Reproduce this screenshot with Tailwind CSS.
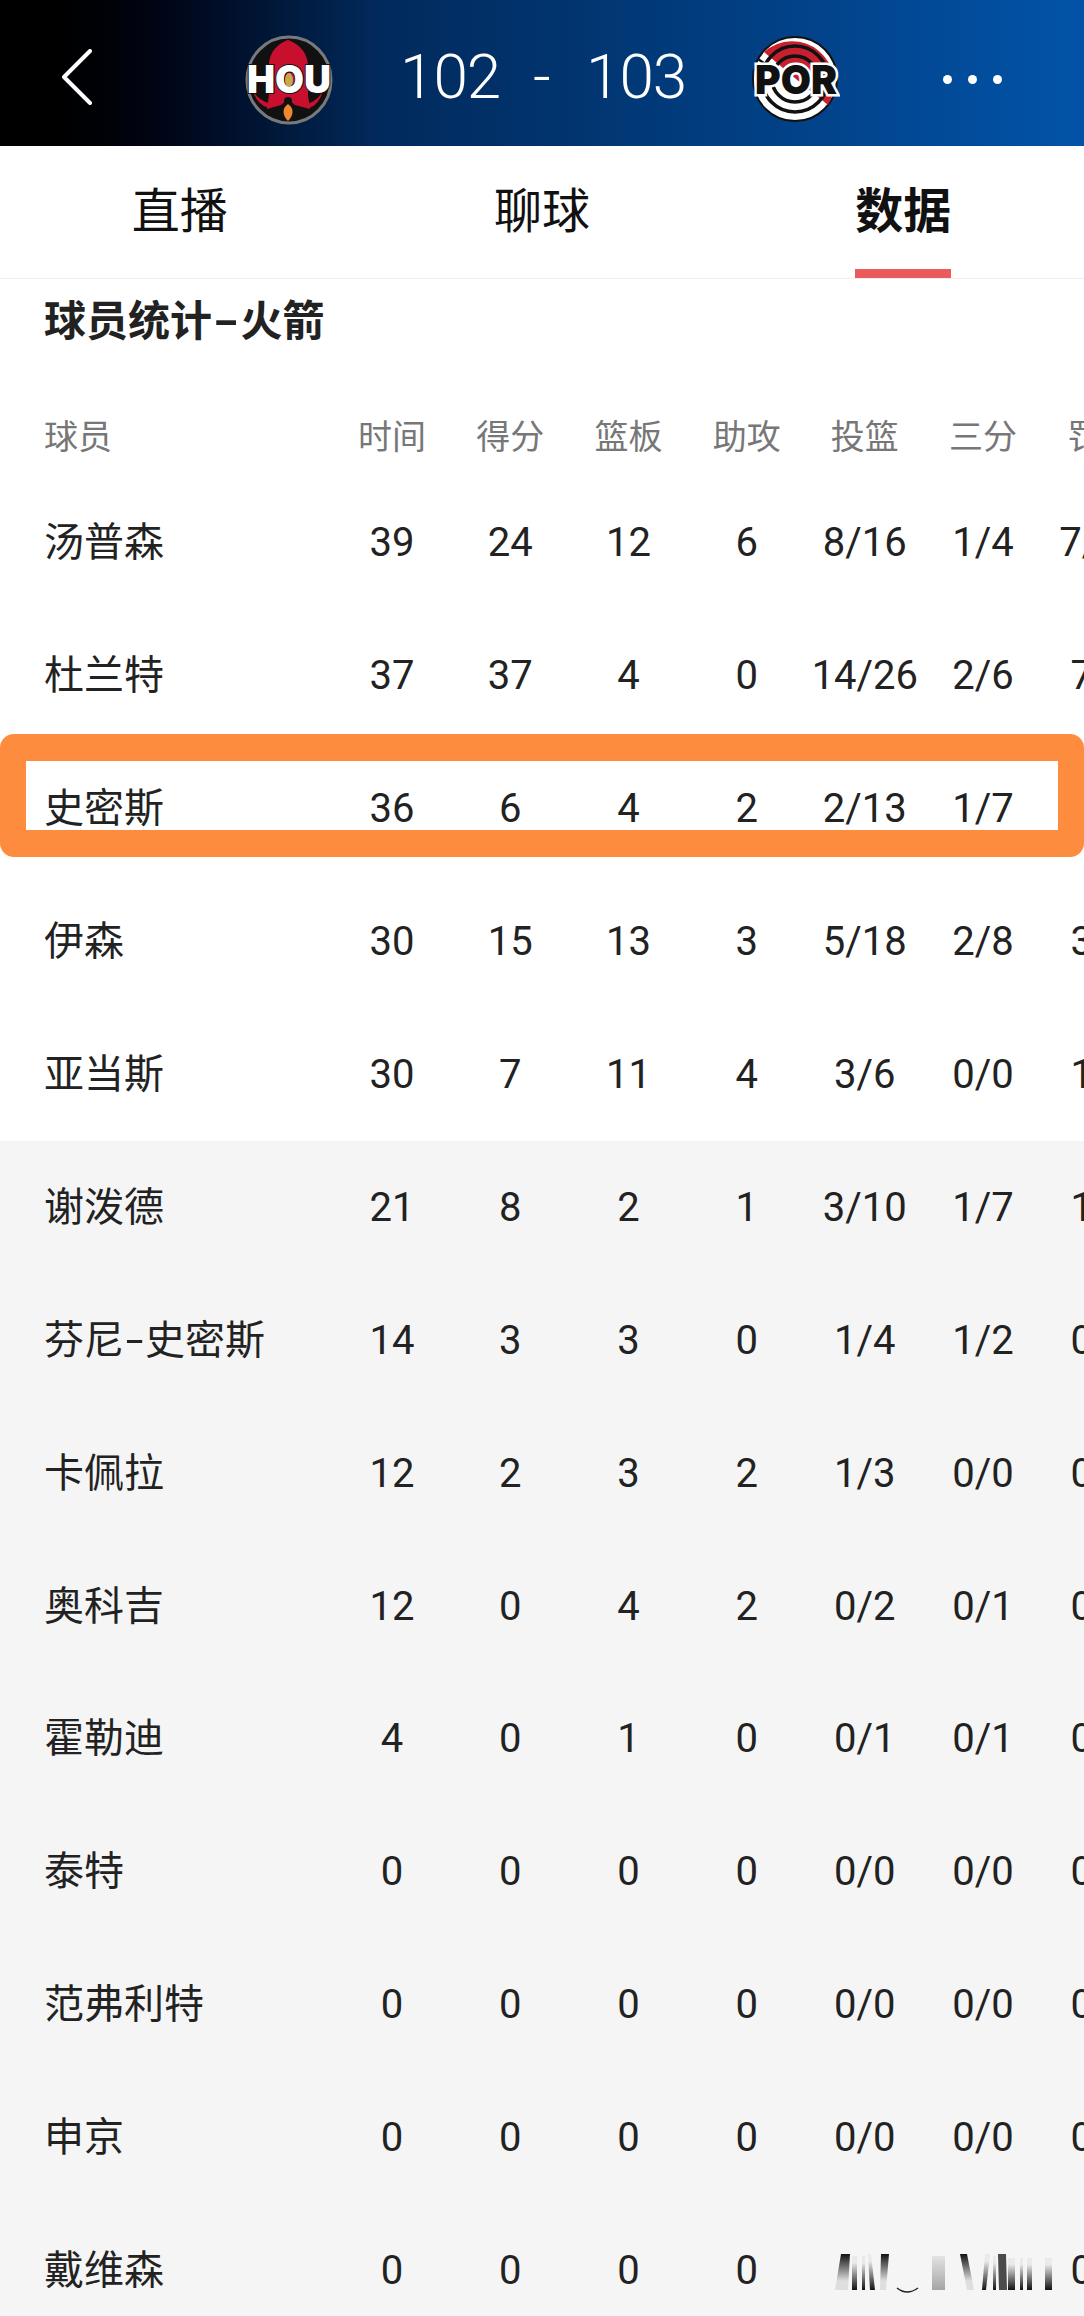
<!DOCTYPE html>
<html lang="zh-CN">

<head>
    <meta charset="UTF-8">
    <meta name="viewport" content="width=device-width, initial-scale=1.0">
    <title>球员统计</title>
    <script src="https://cdn.jsdelivr.net/npm/@tailwindcss/browser@4"></script>
</head>

<body class="font-['Roboto','Noto_Sans_CJK_SC',sans-serif] bg-white">
    <div class="relative w-[1084px] h-[2316px] overflow-hidden">

        <!-- score bar -->
        <header class="flex items-center h-[146px] pt-[8px] pl-[62px] text-white bg-gradient-to-r from-black via-[#012a5c] via-35% to-[#0253a8]">
            <svg class="w-[30px] h-[56px]" viewBox="0 0 30 56" fill="none" stroke="#fff" stroke-width="4" stroke-linecap="round" stroke-linejoin="round">
                <path d="M28 2 L2 28 L28 54"/>
            </svg>
            <svg class="ml-[153px] mt-[6px] w-[88px] h-[90px]" viewBox="0 0 88 90">
                <ellipse cx="44" cy="45" rx="42" ry="43" fill="#111" stroke="#77797c" stroke-width="3"/>
                <path d="M43 5 C54 9 64 18 63 34 L63 60 L65 74 L50 70 L43 64 L36 70 L22 74 L24 60 L24 34 C23 18 32 9 43 5Z" fill="#c8102e"/>
                <path d="M8 56 Q14 66 24 68 L24 73 Q12 70 8 56Z M78 56 Q72 66 64 68 L64 73 Q74 70 78 56Z" fill="#c8102e"/>
                <circle cx="43" cy="66" r="4" fill="#111"/>
                <path d="M43 69 C49 73 49 80 43 86 C37 80 37 73 43 69Z" fill="#f0872f"/>
                <text x="44" y="58" text-anchor="middle" font-family="Inter, Roboto, sans-serif" font-weight="900" font-size="38" fill="#fff" stroke="#111" stroke-width="2" paint-order="stroke" textLength="84" lengthAdjust="spacingAndGlyphs">HOU</text>
                <ellipse cx="44" cy="45" rx="4" ry="7" fill="#c9a94e"/>
            </svg>
            <div class="ml-[67px] w-[98px] text-[62px] font-light leading-none tracking-[-1px]">102</div>
            <div class="w-[88px] text-center text-[62px] font-light leading-none">-</div>
            <div class="w-[98px] text-[62px] font-light leading-none tracking-[-1px]">103</div>
            <svg class="ml-[68px] mt-[6px] w-[88px] h-[90px]" viewBox="0 0 88 90" fill="none">
                <circle cx="43" cy="44" r="42" fill="#fff" stroke="#111" stroke-width="2"/>
                <path d="M12 17 A42 42 0 0 1 76 70 L44 44Z" fill="#c8202f"/>
                <circle cx="43" cy="44" r="33" stroke="#111" stroke-width="3.5"/>
                <circle cx="43" cy="44" r="23" stroke="#111" stroke-width="3.5"/>
                <path d="M6 24 L20 34" stroke="#111" stroke-width="2.5"/>
                <text x="44" y="59" text-anchor="middle" font-family="Inter, Roboto, sans-serif" font-weight="900" font-size="40" fill="#111" stroke="#fff" stroke-width="5" paint-order="stroke" textLength="82" lengthAdjust="spacingAndGlyphs">POR</text>
            </svg>
            <div class="ml-[103px] flex gap-[16px] mt-[4px]">
                <span class="w-[9px] h-[9px] rounded-full bg-white"></span>
                <span class="w-[9px] h-[9px] rounded-full bg-white"></span>
                <span class="w-[9px] h-[9px] rounded-full bg-white"></span>
            </div>
        </header>

        <!-- tabs -->
        <nav class="grid grid-cols-3 h-[133px] border-b border-[#efefef] text-[48px] text-[#111] bg-white">
            <div class="flex items-center justify-center pr-[2px]">直播</div>
            <div class="flex items-center justify-center">聊球</div>
            <div class="flex justify-center">
                <div class="flex items-center justify-center w-[96px] h-[132px] pt-[9px] border-b-[9px] border-[#ec5b5b] font-bold">数据</div>
            </div>
        </nav>

        <h2 class="h-[118px] pt-[20px] pl-[44px] text-[42px] leading-[46px] font-bold text-[#222]">球员统计<span class="inline-block mx-[6px] scale-x-[1.7]">-</span>火箭</h2>

        <div class="text-[40px] text-[#222]">
            <div class="grid grid-cols-[333px_repeat(7,118.2px)] items-center h-[80px] text-center text-[34px] text-[#777]">
                <div class="text-left pl-[44px]">球员</div><div>时间</div><div>得分</div><div>篮板</div><div>助攻</div><div>投篮</div><div>三分</div><div>罚球</div>
            </div>
            <div class="bg-white">
                <div class="grid grid-cols-[333px_repeat(7,118.2px)] items-center h-[132.9px] text-center"><div class="text-left pl-[44px]">汤普森</div><div>39</div><div>24</div><div>12</div><div>6</div><div>8/16</div><div>1/4</div><div>7/10</div></div>
                <div class="grid grid-cols-[333px_repeat(7,118.2px)] items-center h-[132.9px] text-center"><div class="text-left pl-[44px]">杜兰特</div><div>37</div><div>37</div><div>4</div><div>0</div><div>14/26</div><div>2/6</div><div>7/8</div></div>
                <div class="grid grid-cols-[333px_repeat(7,118.2px)] items-center h-[132.9px] text-center"><div class="text-left pl-[44px]">史密斯</div><div>36</div><div>6</div><div>4</div><div>2</div><div>2/13</div><div>1/7</div><div>2/2</div></div>
                <div class="grid grid-cols-[333px_repeat(7,118.2px)] items-center h-[132.9px] text-center"><div class="text-left pl-[44px]">伊森</div><div>30</div><div>15</div><div>13</div><div>3</div><div>5/18</div><div>2/8</div><div>3/4</div></div>
                <div class="grid grid-cols-[333px_repeat(7,118.2px)] items-center h-[132.9px] text-center"><div class="text-left pl-[44px]">亚当斯</div><div>30</div><div>7</div><div>11</div><div>4</div><div>3/6</div><div>0/0</div><div>1/2</div></div>
            </div>
            <div class="bg-[#f5f5f5]">
                <div class="grid grid-cols-[333px_repeat(7,118.2px)] items-center h-[132.9px] text-center"><div class="text-left pl-[44px]">谢泼德</div><div>21</div><div>8</div><div>2</div><div>1</div><div>3/10</div><div>1/7</div><div>1/2</div></div>
                <div class="grid grid-cols-[333px_repeat(7,118.2px)] items-center h-[132.9px] text-center"><div class="text-left pl-[44px]">芬尼<span class="inline-block mx-[5px] scale-x-[1.6]">-</span>史密斯</div><div>14</div><div>3</div><div>3</div><div>0</div><div>1/4</div><div>1/2</div><div>0/0</div></div>
                <div class="grid grid-cols-[333px_repeat(7,118.2px)] items-center h-[132.9px] text-center"><div class="text-left pl-[44px]">卡佩拉</div><div>12</div><div>2</div><div>3</div><div>2</div><div>1/3</div><div>0/0</div><div>0/0</div></div>
                <div class="grid grid-cols-[333px_repeat(7,118.2px)] items-center h-[132.9px] text-center"><div class="text-left pl-[44px]">奥科吉</div><div>12</div><div>0</div><div>4</div><div>2</div><div>0/2</div><div>0/1</div><div>0/0</div></div>
                <div class="grid grid-cols-[333px_repeat(7,118.2px)] items-center h-[132.9px] text-center"><div class="text-left pl-[44px]">霍勒迪</div><div>4</div><div>0</div><div>1</div><div>0</div><div>0/1</div><div>0/1</div><div>0/0</div></div>
                <div class="grid grid-cols-[333px_repeat(7,118.2px)] items-center h-[132.9px] text-center"><div class="text-left pl-[44px]">泰特</div><div>0</div><div>0</div><div>0</div><div>0</div><div>0/0</div><div>0/0</div><div>0/0</div></div>
                <div class="grid grid-cols-[333px_repeat(7,118.2px)] items-center h-[132.9px] text-center"><div class="text-left pl-[44px]">范弗利特</div><div>0</div><div>0</div><div>0</div><div>0</div><div>0/0</div><div>0/0</div><div>0/0</div></div>
                <div class="grid grid-cols-[333px_repeat(7,118.2px)] items-center h-[132.9px] text-center"><div class="text-left pl-[44px]">申京</div><div>0</div><div>0</div><div>0</div><div>0</div><div>0/0</div><div>0/0</div><div>0/0</div></div>
                <div class="grid grid-cols-[333px_repeat(7,118.2px)] items-center h-[132.9px] text-center"><div class="text-left pl-[44px]">戴维森</div><div>0</div><div>0</div><div>0</div><div>0</div><div>0/0</div><div>0/0</div><div>0/0</div></div>
            </div>
        </div>

        <!-- orange highlight drawn over the third row -->
        <div class="absolute left-0 top-[734px] w-full h-[123px] border-x-[26px] border-y-[27px] border-[#fe8c3e] rounded-[14px]"></div>

        <!-- smeared watermark over the last row -->
        <svg class="absolute left-[826px] top-[2246px] w-[236px] h-[54px] bg-[#f5f5f5]" viewBox="826 2246 236 54" fill="none">
            <defs>
                <linearGradient id="down" x1="0" y1="0" x2="0" y2="1"><stop offset="0" stop-color="#111"/><stop offset="0.75" stop-color="#111" stop-opacity="0.1"/></linearGradient>
                <linearGradient id="up" x1="0" y1="1" x2="0" y2="0"><stop offset="0" stop-color="#111"/><stop offset="0.8" stop-color="#111" stop-opacity="0.05"/></linearGradient>
                <linearGradient id="flat" x1="0" y1="0" x2="0" y2="1"><stop offset="0" stop-color="#111" stop-opacity="0.08"/><stop offset="1" stop-color="#111" stop-opacity="0.35"/></linearGradient>
            </defs>
            <path d="M841 2254h9l-2 36h-13z" fill="url(#down)"/>
            <rect x="852" y="2256" width="5" height="34" fill="url(#up)"/>
            <rect x="862" y="2256" width="3" height="34" fill="url(#up)"/>
            <path d="M868 2254h3l4 36h-5z" fill="url(#up)"/>
            <path d="M881 2254h8l-3 36h-6z" fill="url(#down)"/>
            <path d="M897 2288q10 8 21 0" stroke="#222" stroke-width="1.5"/>
            <rect x="932" y="2256" width="13" height="34" fill="url(#flat)"/>
            <path d="M960 2254h7l7 36h-7z" fill="url(#down)"/>
            <path d="M982 2290l3 -36h5l-4 36z" fill="url(#up)"/>
            <rect x="993" y="2256" width="3" height="34" fill="url(#up)"/>
            <path d="M998 2254h8l1 36h-8z" fill="#111" fill-opacity="0.75"/>
            <rect x="1008" y="2258" width="7" height="32" fill="url(#up)"/>
            <rect x="1020" y="2258" width="3" height="32" fill="url(#up)"/>
            <rect x="1027" y="2258" width="5" height="32" fill="url(#up)"/>
            <rect x="1045" y="2258" width="7" height="32" fill="url(#up)"/>
        </svg>
    </div>
</body>

</html>
